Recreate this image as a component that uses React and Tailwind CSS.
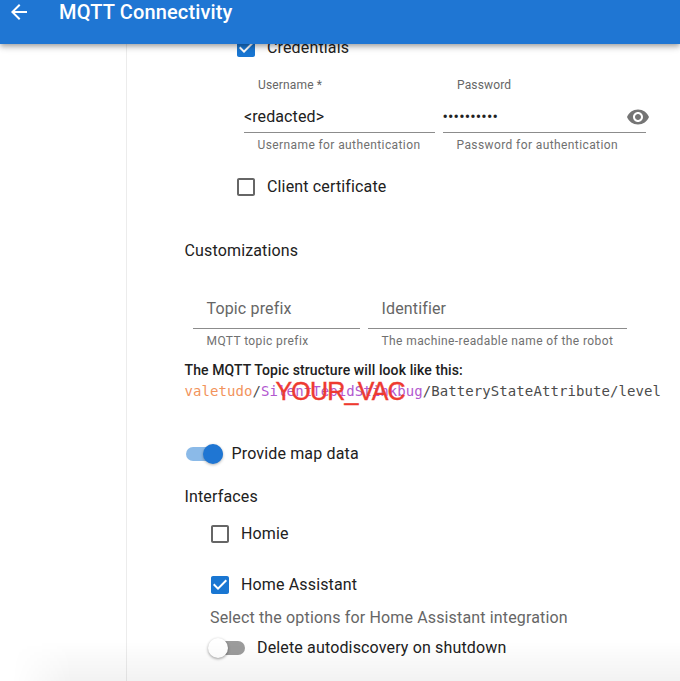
import React from "react";

const CHECK = "M19 3H5c-1.11 0-2 .9-2 2v14c0 1.1.89 2 2 2h14c1.11 0 2-.9 2-2V5c0-1.1-.89-2-2-2zm-9 14l-5-5 1.41-1.41L10 14.17l7.59-7.59L19 8l-9 9z";
const EMPTY = "M19 5v14H5V5h14m0-2H5c-1.1 0-2 .9-2 2v14c0 1.1.9 2 2 2h14c1.1 0 2-.9 2-2V5c0-1.1-.9-2-2-2z";

function Checkbox({ checked, label, className }) {
  return (
    <label className={`flex h-6 items-center gap-[9px] ${className}`}>
      <svg viewBox="0 0 24 24" className={`h-6 w-6 shrink-0 ${checked ? "text-[#1976d2]" : "text-[#666666]"}`} fill="currentColor">
        <path d={checked ? CHECK : EMPTY} />
      </svg>
      <span className="text-base leading-6 tracking-[0.15px] whitespace-nowrap">{label}</span>
    </label>
  );
}

function Field({ label, helper, className, children }) {
  return (
    <div className={className}>
      {label && <div className="ml-[14px] h-5 text-xs leading-5 tracking-[0.15px] whitespace-nowrap text-[#666666]">{label}</div>}
      {children}
      <div className="mt-[2px] ml-[13.5px] h-5 text-xs leading-5 tracking-[0.4px] whitespace-nowrap text-[#707070]">{helper}</div>
    </div>
  );
}

export default function App() {
  return (
    <div className="relative flex h-[681px] w-[680px] flex-col overflow-hidden bg-white font-[Roboto,sans-serif] text-[#212121]">
      <header className="relative z-10 flex h-11 shrink-0 items-start bg-[#1f76d3] text-white shadow-[0_2px_4px_-1px_rgba(0,0,0,0.2),0_4px_5px_0_rgba(0,0,0,0.14),0_1px_10px_0_rgba(0,0,0,0.12)]">
        <svg viewBox="0 0 24 24" className="ml-[7px] h-6 w-6" fill="currentColor">
          <path d="M20 11H7.83l5.59-5.59L12 4l-8 8 8 8 1.41-1.41L7.83 13H20v-2z" />
        </svg>
        <h1 className="ml-7 text-xl leading-6 font-medium tracking-[0.15px]">MQTT Connectivity</h1>
      </header>

      <div className="flex min-h-0 flex-1">
        <aside className="w-[127px] shrink-0 border-r border-[#ececec]" />
        <main className="min-w-0 flex-1 pl-[57.5px]">
          <Checkbox checked label="Credentials" className="-mt-2 ml-[49.5px]" />

          <div className="mt-[15px] ml-[59.5px] flex gap-2">
            <Field label="Username *" helper="Username for authentication" className="w-[191px]">
              <div className="flex h-[38px] items-end border-b border-[#8c8c8c] pb-[3px] text-base leading-6 tracking-[0.1px]">&lt;redacted&gt;</div>
            </Field>
            <Field label="Password" helper="Password for authentication" className="w-[203px]">
              <div className="flex h-[38px] items-end justify-between border-b border-[#8c8c8c] pb-[3px]">
                <span className="-ml-[0.5px] text-base leading-6 tracking-[0.15px]">••••••••••</span>
                <svg viewBox="0 0 24 24" className="-mr-1 h-6 w-6 shrink-0 text-[#757575]" fill="currentColor">
                  <path d="M12 4.5C7 4.5 2.73 7.61 1 12c1.73 4.39 6 7.5 11 7.5s9.27-3.11 11-7.5c-1.73-4.39-6-7.5-11-7.5zM12 17c-2.76 0-5-2.24-5-5s2.24-5 5-5 5 2.24 5 5-2.24 5-5 5zm0-8c-1.66 0-3 1.34-3 3s1.34 3 3 3 3-1.34 3-3-1.34-3-3-3z" />
                </svg>
              </div>
            </Field>
          </div>

          <Checkbox label="Client certificate" className="mt-5 ml-[49.5px]" />

          <h2 className="mt-10 text-base leading-6 tracking-[0.15px]">Customizations</h2>

          <div className="mt-[34px] ml-[8.5px] flex gap-2">
            <Field helper="MQTT topic prefix" className="w-[167px]">
              <div className="h-8 border-b border-[#8c8c8c] pl-[13.5px] text-base leading-6 tracking-[0.15px] text-[#666666]">Topic prefix</div>
            </Field>
            <Field helper="The machine-readable name of the robot" className="w-[259px]">
              <div className="h-8 border-b border-[#8c8c8c] pl-[13.5px] text-base leading-6 tracking-[0.15px] text-[#666666]">Identifier</div>
            </Field>
          </div>

          <p className="mt-[9px] text-sm leading-5 font-medium tracking-[0.1px]">The MQTT Topic structure will look like this:</p>
          <div className="relative -mt-px h-6 text-sm leading-6 whitespace-nowrap font-['DejaVu_Sans_Mono',monospace] tracking-[0.08px] text-[#4c4c4c]">
            <span className="text-[#f2935c]">valetudo</span>/<span className="text-[#b258cf]">SilentTepidStinkbug</span>/BatteryStateAttribute/level
            <span className="absolute top-0 left-[91px] text-[25px] leading-6 tracking-[-0.8px] font-['Liberation_Sans',sans-serif] text-[#ee3a30] [-webkit-text-stroke:0.4px_#ee3a30]">YOUR_VAC</span>
          </div>

          <label className="mt-[39px] flex h-6 items-center gap-[8.5px]">
            <span className="ml-[1.5px] flex h-[14px] w-[37px] items-center justify-end rounded-full bg-[#8bbae8]">
              <span className="h-5 w-5 rounded-full bg-[#1f76d3] shadow-[0_1px_3px_rgba(0,0,0,0.3)]" />
            </span>
            <span className="text-base leading-6 tracking-[0.15px]">Provide map data</span>
          </label>

          <h2 className="mt-[19px] text-base leading-6 tracking-[0.15px]">Interfaces</h2>

          <Checkbox label="Homie" className="mt-[13px] ml-[23.5px]" />
          <Checkbox checked label="Home Assistant" className="mt-[27px] ml-[23.5px]" />
          <p className="mt-[9px] ml-[25.5px] text-base leading-6 tracking-[0.15px] text-[#666666]">Select the options for Home Assistant integration</p>
          <label className="mt-[6px] ml-[23.5px] flex h-6 items-center gap-3">
            <span className="flex h-[14px] w-[37px] items-center rounded-full bg-linear-to-r from-transparent from-30% to-[#9c9c9c] to-30%">
              <span className="h-5 w-5 shrink-0 rounded-full bg-white shadow-[0_1px_3px_rgba(0,0,0,0.4)]" />
            </span>
            <span className="text-base leading-6 tracking-[0.15px]">Delete autodiscovery on shutdown</span>
          </label>
        </main>
      </div>
      <div className="pointer-events-none absolute right-0 bottom-0 left-3 h-10 bg-linear-to-b from-transparent to-black/5 [mask-image:linear-gradient(to_right,transparent,black_60px)]" />
    </div>
  );
}
